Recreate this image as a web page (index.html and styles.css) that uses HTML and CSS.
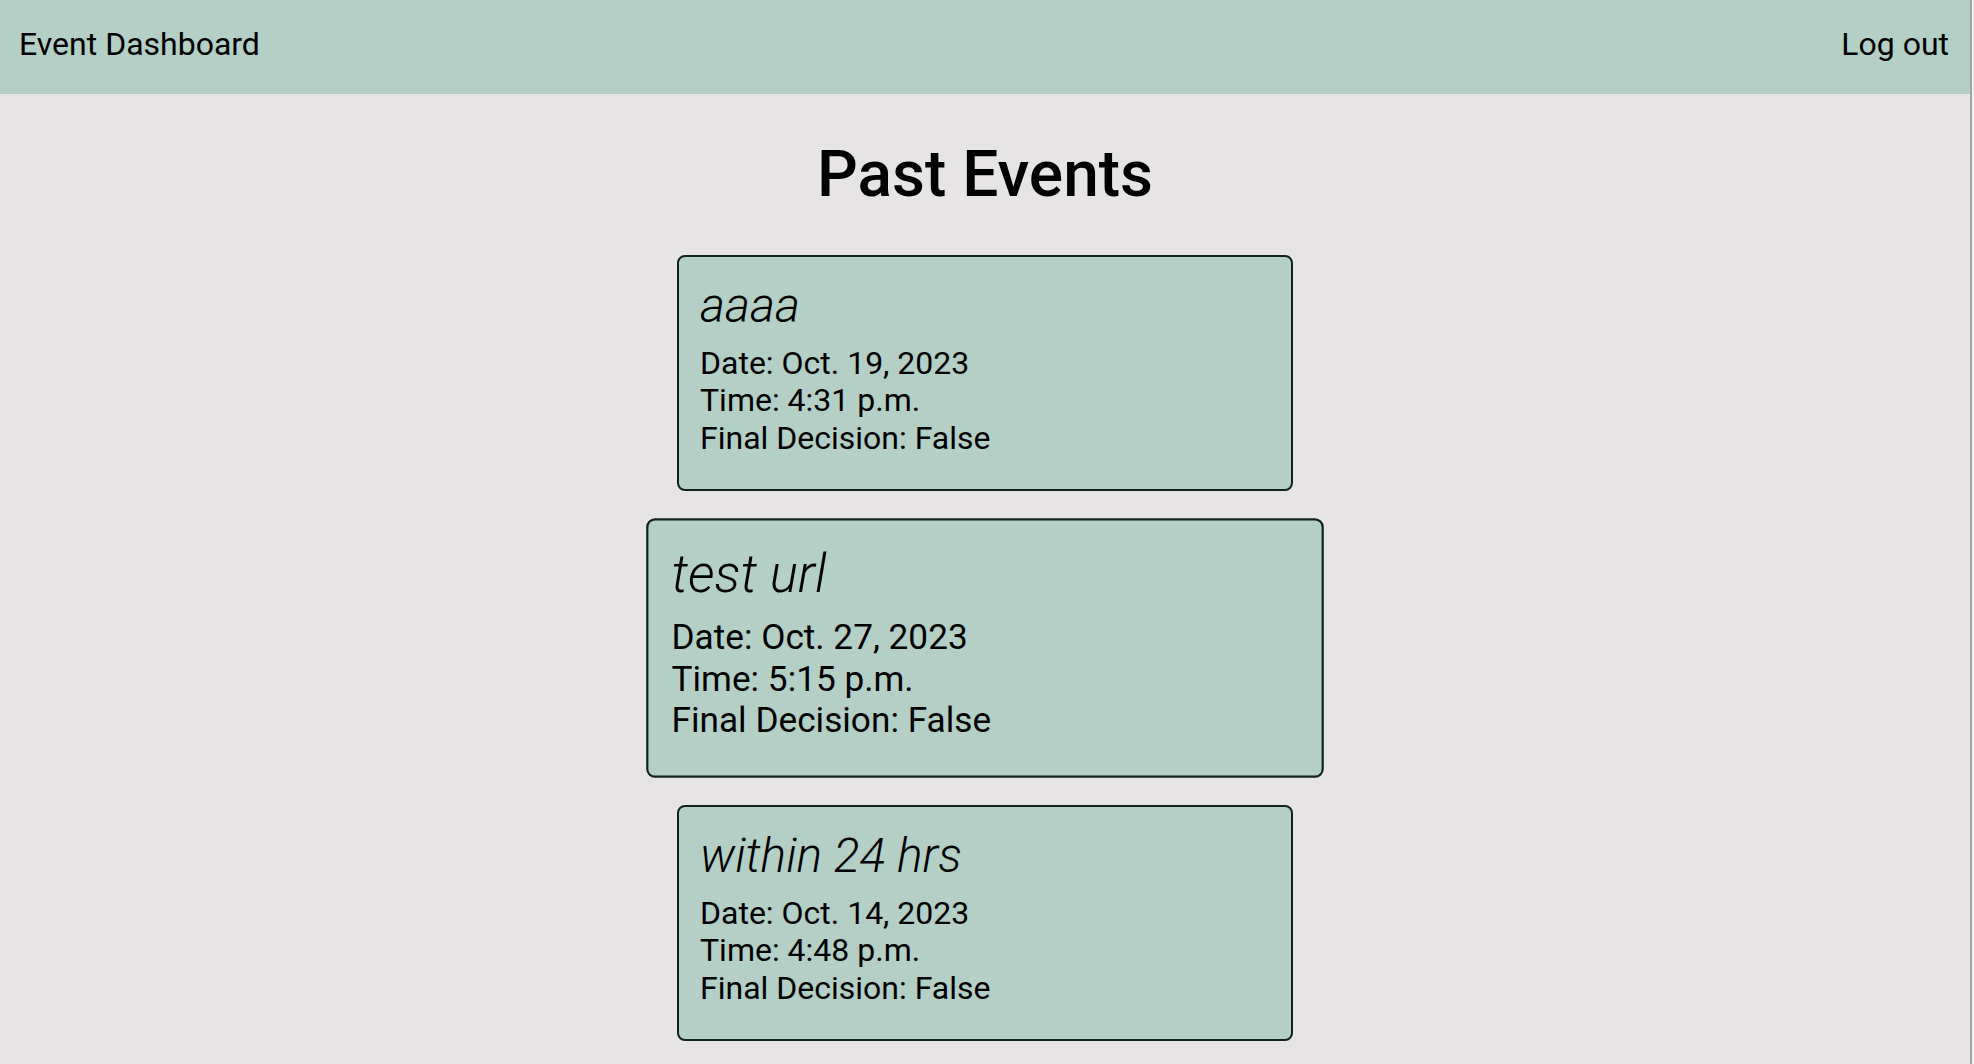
FILE: index.html
```html
<!DOCTYPE html>
<html lang="en">
<head>
<meta charset="utf-8">
<title>Past Events</title>
<link rel="stylesheet" href="styles.css">
</head>
<body>
<header class="topbar">
  <a class="brand" href="#">Event Dashboard</a>
  <a class="logout" href="#">Log out</a>
</header>
<main class="content">
  <h1 class="page-title">Past Events</h1>
  <div class="event-list">
    <article class="card">
      <h2 class="card-title">aaaa</h2>
      <p class="card-info">Date: Oct. 19, 2023<br>Time: 4:31 p.m.<br>Final Decision: False</p>
    </article>
    <article class="card card-hover">
      <h2 class="card-title">test url</h2>
      <p class="card-info">Date: Oct. 27, 2023<br>Time: 5:15 p.m.<br>Final Decision: False</p>
    </article>
    <article class="card">
      <h2 class="card-title">within 24 hrs</h2>
      <p class="card-info">Date: Oct. 14, 2023<br>Time: 4:48 p.m.<br>Final Decision: False</p>
    </article>
  </div>
</main>
</body>
</html>
```
FILE: styles.css
```css
html {
  background: #f1f1f1;
}
body {
  margin: 0 2px 0 0;
  border-right: 2px solid #a3a3a3;
  background: #e6e4e5;
  min-height: 100vh;
  font-family: Roboto, "Liberation Sans", sans-serif;
  color: #000;
}
.topbar {
  display: flex;
  justify-content: space-between;
  align-items: flex-start;
  background: #b3cfc6;
  height: 94px;
  box-sizing: border-box;
  padding: 26px 21px 0 19px;
}
.topbar a {
  color: #000;
  text-decoration: none;
  font-size: 32px;
  line-height: 37.5px;
}
.content {
  display: flex;
  flex-direction: column;
  align-items: center;
  padding-bottom: 40px;
}
.page-title {
  font-size: 64px;
  font-weight: 500;
  margin: 42.9px 0 43px;
  line-height: 75px;
}
.event-list {
  display: flex;
  flex-direction: column;
  align-items: center;
  gap: 39px;
}
.card {
  box-sizing: border-box;
  width: 616px;
  height: 236px;
  background: #b3cfc6;
  border: 2px solid #10221e;
  border-radius: 8px;
  padding: 21px 21px;
}
.card-hover {
  transform: scale(1.1);
}
.card-title {
  font-size: 48px;
  font-style: italic;
  font-weight: 300;
  margin: 0 0 11px;
  line-height: 56px;
}
.card-info {
  font-size: 32px;
  line-height: 37.5px;
  margin: 0;
}
```
